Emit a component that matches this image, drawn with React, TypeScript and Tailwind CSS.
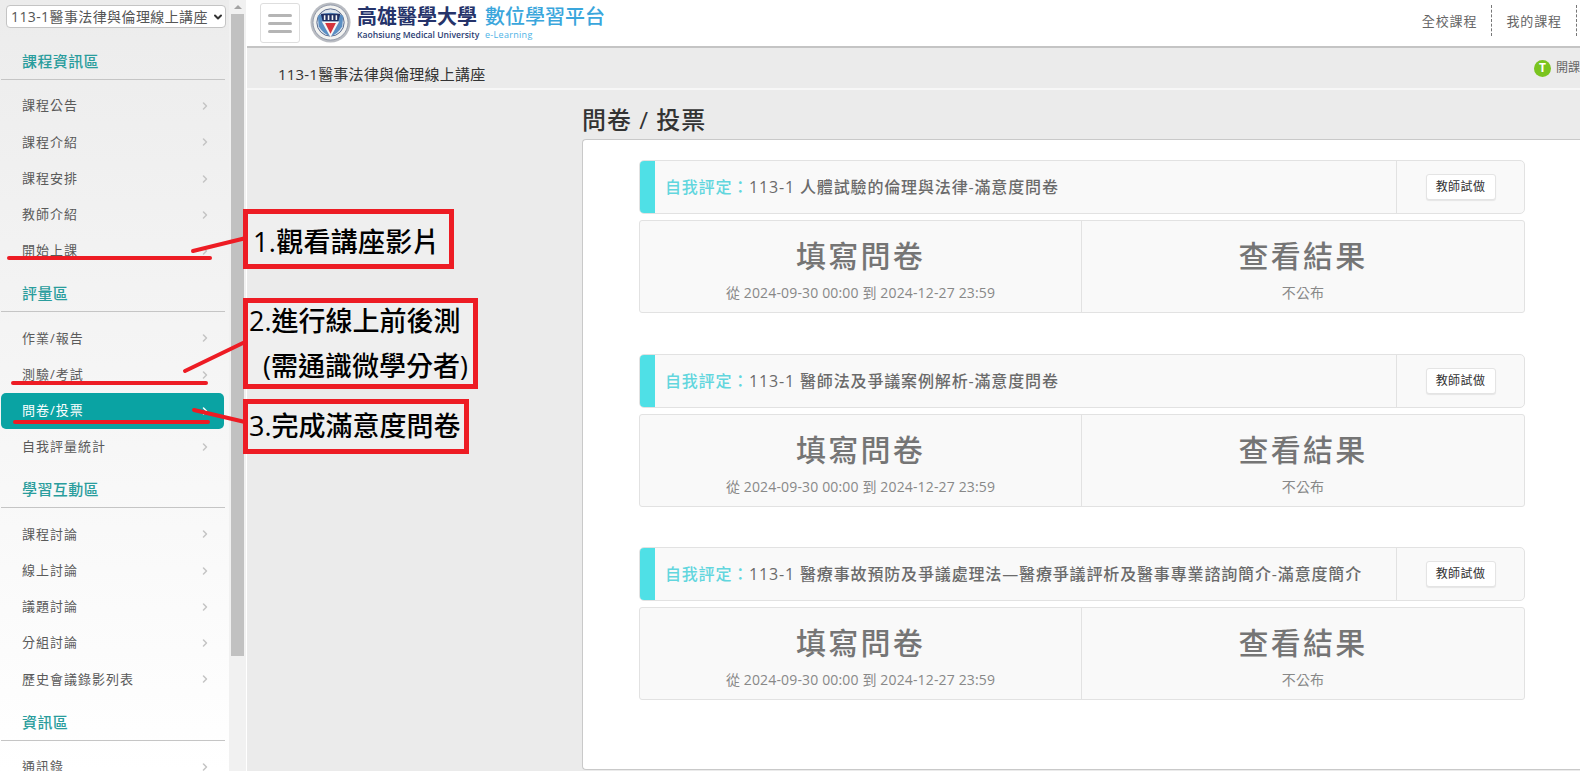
import type { ReactNode } from "react";
import { ChevronDown, ChevronRight } from "lucide-react";

const font = "[font-family:'Open_Sans','Noto_Sans_CJK_TC',sans-serif]";

const groups = [
  { title: "課程資訊區", items: ["課程公告", "課程介紹", "課程安排", "教師介紹", "開始上課"] },
  { title: "評量區", items: ["作業/報告", "測驗/考試", "問卷/投票", "自我評量統計"] },
  { title: "學習互動區", items: ["課程討論", "線上討論", "議題討論", "分組討論", "歷史會議錄影列表"] },
  { title: "資訊區", items: ["通訊錄"] },
];

const surveys = [
  "113-1 人體試驗的倫理與法律-滿意度問卷",
  "113-1 醫師法及爭議案例解析-滿意度問卷",
  "113-1 醫療事故預防及爭議處理法—醫療爭議評析及醫事專業諮詢簡介-滿意度簡介",
];

function Logo() {
  return (
    <svg width="41" height="41" viewBox="0 0 42 42" className="shrink-0">
      <circle cx="21" cy="21" r="20.5" fill="#b9bcc2" />
      <circle cx="21" cy="21" r="18" fill="#f3f3f1" stroke="#8f97a8" strokeWidth="1" />
      <circle cx="21" cy="21" r="14" fill="#dfe6ee" stroke="#58698c" strokeWidth="1" />
      <path d="M8 14 Q21 8 34 14 L33 25 Q28 33 21 35 Q14 33 9 25 Z" fill="#5b8fc4" />
      <path d="M11 12 H31 L29 20 H13 Z" fill="#1f2f63" />
      <path d="M15 13.5 V18.5 M19 13.5 V18.5 M23 13.5 V18.5 M27 13.5 V18.5" stroke="#f2f2f2" strokeWidth="1.6" />
      <path d="M12 20 H30 L21 36 Z" fill="#f7f7f7" />
      <path d="M15.5 21.5 H26.5 L21 32.5 Z" fill="#d5343d" />
    </svg>
  );
}

function Sidebar() {
  return (
    <aside className="w-[229px] h-full shrink-0 overflow-hidden bg-gradient-to-b from-[#ececec] to-[#ffffff]">
      <div className="pl-[6px] pt-[5px] pb-[9px]">
        <div className="h-[23px] w-[220px] bg-white border border-[#c4c4c4] rounded-[4px] flex items-center pl-[4px] text-[14px] text-[#555] tracking-[0.4px] whitespace-nowrap overflow-hidden">
          <span className="flex-1">113-1醫事法律與倫理線上講座</span>
          <ChevronDown size={12} strokeWidth={4} className="mr-[1px] text-[#333] shrink-0" />
        </div>
      </div>
      {groups.map((g) => (
        <section key={g.title}>
          <h2 className="h-[39px] mt-[4px] w-[224px] ml-[1px] pl-[21px] pt-[9px] border-b border-[#c5c5c5] text-[15px] leading-[22px] font-medium tracking-[0.4px] text-[#2a9d9d]">
            {g.title}
          </h2>
          <ul className="pt-[8px]">
            {g.items.map((it) => {
              const on = it === "問卷/投票";
              return (
                <li
                  key={it}
                  className={`h-[36.25px] w-[223px] ml-[1px] pl-[21px] pr-[13px] flex items-center justify-between rounded-[5px] text-[13px] tracking-[1px] ${on ? "bg-[#0aa3a3] text-white" : "text-[#5a5a5a]"}`}
                >
                  <span>{it}</span>
                  <ChevronRight size={12} strokeWidth={3} className={on ? "text-white" : "text-[#c4c4c4]"} />
                </li>
              );
            })}
          </ul>
        </section>
      ))}
    </aside>
  );
}

function Scrollbar() {
  return (
    <div className="w-[17px] h-full shrink-0 bg-[#f1f1f1] pl-[2px]">
      <div className="w-[13px] h-[14px] flex items-center justify-center">
        <div className="w-0 h-0 border-l-[4px] border-r-[4px] border-b-[4px] border-l-transparent border-r-transparent border-b-[#a3a3a3]" />
      </div>
      <div className="w-[13px] h-[642px] bg-[#c1c1c1]" />
    </div>
  );
}

function Survey({ title }: { title: string }) {
  return (
    <div className="mb-[40.6px]">
      <div className="h-[54px] flex bg-[#f9f9f9] border border-[#e2e2e2] rounded-[5px] overflow-hidden">
        <div className="w-[16px] bg-[#4fe0e6] -my-px -ml-px shrink-0" />
        <div className="flex-1 pl-[10px] flex items-center text-[16px] font-medium whitespace-nowrap text-[#6b6b6b] tracking-[0.85px]">
          <span className="text-[#62d6de] tracking-[0.8px]">自我評定：</span>
          <span>{title}</span>
        </div>
        <div className="w-[128px] shrink-0 border-l border-[#e2e2e2] flex items-center justify-center">
          <button className="w-[70px] h-[26px] bg-white border border-[#e4e4e4] rounded-[3px] shadow-[0_1px_1px_rgba(0,0,0,0.08)] text-[12px] text-[#333] tracking-[0.4px]">
            教師試做
          </button>
        </div>
      </div>
      <div className="mt-[6px] h-[93px] grid grid-cols-[441px_1fr] bg-[#f9f9f9] border border-[#e2e2e2] rounded-[3px]">
        {[
          ["填寫問卷", "從 2024-09-30 00:00 到 2024-12-27 23:59"],
          ["查看結果", "不公布"],
        ].map(([h, s], i) => (
          <div key={h} className={`flex flex-col items-center pt-[14px] ${i ? "border-l border-[#e2e2e2]" : ""}`}>
            <div className="text-[30px] leading-[42px] font-medium text-[#757575] tracking-[2.3px]">{h}</div>
            <div className="text-[14px] leading-[20px] mt-[6px] text-[#888] tracking-[0.15px]">{s}</div>
          </div>
        ))}
      </div>
    </div>
  );
}

function Main() {
  return (
    <main className="flex-1 min-w-0 h-full bg-[#ebebeb] flex flex-col overflow-hidden">
      <header className="h-[48px] shrink-0 bg-white border-b-2 border-[#c4c4c4] flex items-start pl-[13px]">
        <button className="mt-[3px] w-[40px] h-[40px] border border-[#dedede] rounded-[3px] flex flex-col items-center justify-center gap-[5px] shrink-0">
          <span className="w-[24px] h-[3px] bg-[#b5b5b5] rounded-sm" />
          <span className="w-[24px] h-[3px] bg-[#b5b5b5] rounded-sm" />
          <span className="w-[24px] h-[3px] bg-[#b5b5b5] rounded-sm" />
        </button>
        <div className="ml-[10px] mt-[2px]"><Logo /></div>
        <div className="ml-[6px] mt-[4px] flex flex-col w-[122px] shrink-0">
          <div className="text-[20px] leading-[25px] font-bold text-[#25336a] whitespace-nowrap">高雄醫學大學</div>
          <div className="text-[8.6px] leading-[12px] font-semibold text-[#2b3d73] whitespace-nowrap">Kaohsiung Medical University</div>
        </div>
        <div className="ml-[6px] mt-[4px] flex flex-col">
          <div className="text-[20px] leading-[25px] font-medium text-[#3aa6dc] whitespace-nowrap">數位學習平台</div>
          <div className="text-[9px] leading-[12px] text-[#4db3e6] whitespace-nowrap tracking-[0.3px]">e-Learning</div>
        </div>
        <nav className="ml-auto mt-[5px] mr-[3px] h-[31px] flex items-center text-[13px] text-[#666] tracking-[0.9px] shrink-0">
          <span className="pr-[14px] pt-[3px] whitespace-nowrap">全校課程</span>
          <span className="pl-[14px] pr-[14px] pt-[3px] border-l border-dashed border-[#777] h-full flex items-center whitespace-nowrap">我的課程</span>
          <span className="w-[1px] border-l border-dashed border-[#777] h-full" />
        </nav>
      </header>
      <div className="h-[42px] shrink-0 border-b-2 border-[#f7f7f7] flex items-center pl-[31px] pt-[13px] justify-between whitespace-nowrap">
        <span className="text-[15px] text-[#333] tracking-[0.2px]">113-1醫事法律與倫理線上講座</span>
        <span className="flex items-center gap-[5px] text-[12px] text-[#666] w-[46px] -mt-[13px] shrink-0 overflow-hidden">
          <span className="w-[17px] h-[17px] rounded-full bg-[#7ac41f] text-white text-[12px] font-bold leading-none flex items-center justify-center shrink-0">T</span>
          <span>開課</span>
        </span>
      </div>
      <div className="pl-[335px] flex-1 min-h-0 flex flex-col">
        <h1 className="h-[49px] pt-[14px] text-[24px] leading-[32px] font-medium text-[#333] tracking-[1px] whitespace-nowrap">問卷 / 投票</h1>
        <div className="h-[631px] shrink-0 bg-white border border-[#c9c9c9] rounded-l-[4px] border-r-0 pt-[20px] pl-[56px] pr-[55px]">
          {surveys.map((s) => <Survey key={s} title={s} />)}
        </div>
      </div>
    </main>
  );
}

function Callout({ className, children }: { className: string; children: ReactNode }) {
  return (
    <div className={`absolute border-[5px] border-[#ed1c24] bg-[#efefef] text-black font-medium text-[27px] whitespace-nowrap ${className}`}>
      {children}
    </div>
  );
}

function Annotations() {
  return (
    <>
      <svg width="480" height="440" className="absolute left-0 top-0 pointer-events-none">
        <g stroke="#ed1c24" fill="none" strokeLinecap="round">
          <path d="M9 258 H210" strokeWidth="4" />
          <path d="M193 251 L246 238" strokeWidth="4" />
          <path d="M13 383 H206" strokeWidth="4" />
          <path d="M185 371 L245 342" strokeWidth="4" />
          <path d="M15 422 H208" strokeWidth="4" />
          <path d="M194 410 L245 422" strokeWidth="4" />
        </g>
      </svg>
      <Callout className="left-[243px] top-[209px] w-[211px] h-[60px] pl-[5px] leading-[56px] tracking-[0.3px]">1.觀看講座影片</Callout>
      <Callout className="left-[243px] top-[298px] w-[235px] h-[91px] pl-[1px] leading-[45px]">
        <div className="-mt-[5px]">2.進行線上前後測</div>
        <div className="pl-[14px]">(需通識微學分者)</div>
      </Callout>
      <Callout className="left-[243px] top-[399px] w-[226px] h-[55px] pl-[1px] leading-[43px]">3.完成滿意度問卷</Callout>
    </>
  );
}

export default function App() {
  return (
    <div className={`relative w-[1580px] h-[771px] overflow-hidden flex bg-[#f4f4f4] ${font}`}>
      <Sidebar />
      <Scrollbar />
      <div className="w-[1px] bg-white shrink-0" />
      <Main />
      <Annotations />
    </div>
  );
}
